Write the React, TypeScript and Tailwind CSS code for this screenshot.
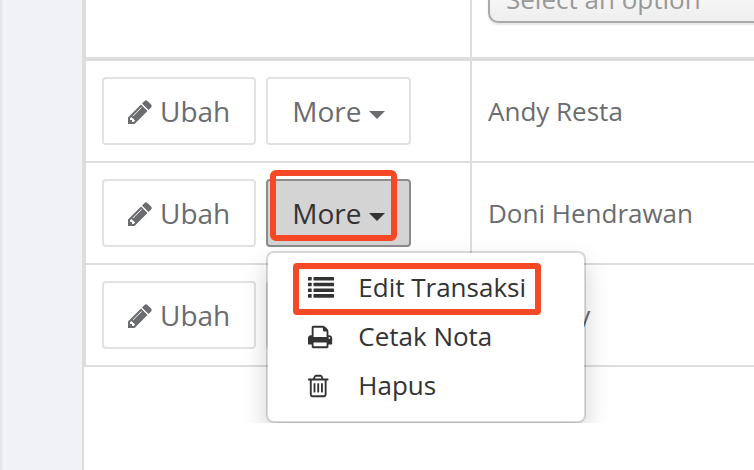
import type { ReactNode } from "react";

interface Order {
  name: string;
  open?: boolean;
}

const orders: Order[] = [
  { name: "Andy Resta" },
  { name: "Doni Hendrawan", open: true },
  { name: "Anthony" },
];

function PencilIcon() {
  return (
    <svg viewBox="128 128 1536 1536" className="mt-0.5 w-6 h-6 fill-current" aria-hidden="true">
      <path d="M491 1536l91-91-235-235-91 91v107h128v128h107zm523-928q0-22-22-22-10 0-17 7l-542 542q-7 7-7 17 0 22 22 22 10 0 17-7l542-542q7-7 7-17zm-54-192l416 416-832 832h-416v-416zm683 96q0 53-37 90l-166 166-416-416 166-165q36-38 90-38 53 0 91 38l235 234q37 39 37 91z" />
    </svg>
  );
}

function ListIcon() {
  return (
    <svg viewBox="0 0 26 26" className="w-[26px] h-[26px] fill-current" aria-hidden="true">
      {[2, 7.7, 13.4, 19.1].map((y) => (
        <g key={y}>
          <rect x="0" y={y} width="3.7" height="3.6" rx="0.5" />
          <rect x="5.5" y={y} width="20.5" height="3.6" rx="0.5" />
        </g>
      ))}
    </svg>
  );
}

function PrintIcon() {
  return (
    <svg viewBox="64 0 1792 1792" className="w-[26px] h-[26px] fill-current" aria-hidden="true">
      <path d="M448 1536h896v-256h-896v256zm0-640h896v-384h-160q-40 0-68-28t-28-68v-160h-640v640zm1152 64q0-26-19-45t-45-19-45 19-19 45 19 45 45 19 45-19 19-45zm128 0v416q0 13-9.5 22.5t-22.5 9.5h-224v160q0 40-28 68t-68 28h-960q-40 0-68-28t-28-68v-160h-224q-13 0-22.5-9.5t-9.5-22.5v-416q0-79 56.5-135.5t135.5-56.5h64v-544q0-40 28-68t68-28h672q40 0 88 20t76 48l152 152q28 28 48 76t20 88v256h64q79 0 135.5 56.5t56.5 135.5z" />
    </svg>
  );
}

function TrashIcon() {
  return (
    <svg viewBox="192 0 1792 1792" className="w-[26px] h-[26px] fill-current" aria-hidden="true">
      <path d="M704 736v576q0 14-9 23t-23 9h-64q-14 0-23-9t-9-23v-576q0-14 9-23t23-9h64q14 0 23 9t9 23zm256 0v576q0 14-9 23t-23 9h-64q-14 0-23-9t-9-23v-576q0-14 9-23t23-9h64q14 0 23 9t9 23zm256 0v576q0 14-9 23t-23 9h-64q-14 0-23-9t-9-23v-576q0-14 9-23t23-9h64q14 0 23 9t9 23zm128 724v-948h-896v948q0 22 7 40.5t14.5 27 10.5 8.5h832q3 0 10.5-8.5t14.5-27 7-40.5zm-672-1076h448l-48-117q-7-9-17-11h-317q-10 2-17 11zm928 32v64q0 14-9 23t-23 9h-96v948q0 83-47 143.5t-113 60.5h-832q-66 0-113-58.5t-47-141.5v-952h-96q-14 0-23-9t-9-23v-64q0-14 9-23t23-9h309l70-167q15-37 54-63t79-26h320q40 0 79 26t54 63l70 167h309q14 0 23 9t9 23z" />
    </svg>
  );
}

function MenuItem({ icon, label, marked }: { icon: ReactNode; label: string; marked?: boolean }) {
  return (
    <li className="relative">
      <a href="#" className="flex h-[49px] items-center gap-6 px-10 text-[26px]">
        {icon}
        {label}
      </a>
      {marked && (
        <span className="pointer-events-none absolute top-0 left-[25px] right-[43px] -bottom-[3px] rounded-sm border-6 border-[#f54825]" />
      )}
    </li>
  );
}

function MoreMenu({ open }: { open?: boolean }) {
  return (
    <div className="relative">
      <button
        type="button"
        aria-expanded={!!open}
        className={
          open
            ? "flex items-center gap-2 rounded-sm border-2 border-[#8c8c8c] bg-[#d4d4d4] px-6 py-3 leading-10 text-[#333]"
            : "flex items-center gap-2 rounded-sm border-2 border-[#e2e2e4] bg-white px-6 py-3 leading-10"
        }
      >
        More
        <span className="mt-2 border-x-8 border-t-8 border-x-transparent border-t-current" />
      </button>
      {open && (
        <>
          {/* Highlight */}
          <span className="pointer-events-none absolute -top-[9px] left-1 h-[71px] w-[127px] rounded-md border-6 border-[#f54825]" />

          {/* Menu */}
          <ul className="absolute left-0 top-[72px] z-10 w-80 rounded-lg border-2 border-black/15 bg-white bg-clip-padding pt-2.5 pb-[11px] text-[#333] shadow-[0_12px_24px_rgba(0,0,0,0.175)]">
            <MenuItem icon={<ListIcon />} label="Edit Transaksi" marked />
            <MenuItem icon={<PrintIcon />} label="Cetak Nota" />
            <MenuItem icon={<TrashIcon />} label="Hapus" />
          </ul>
        </>
      )}
    </div>
  );
}

export default function App() {
  return (
    <div className="flex min-h-screen bg-[#f1f2f7] font-['Open_Sans',sans-serif] text-[#6a6c6f]">
      <aside className="w-[82px] shrink-0 border-l-2 border-[#e4e5e7]" />

      <main className="min-w-0 flex-1 border-l-2 border-[#ddd] bg-white">
        <div className="overflow-hidden pb-14">
          <table className="w-[calc(100%+80px)] table-fixed border-separate border-spacing-0 border-l-2 border-[#ddd] text-left">
            <thead>
              <tr>
                <th className="w-[386px] border-b-4 border-r-2 border-[#ddd]" aria-label="Aksi" />
                <th className="border-b-4 border-[#ddd] px-4 py-0 font-normal">
                  {/* Filter */}
                  <div className="flex h-[57px] items-end pb-[34px]">
                    <select
                      aria-label="Nama"
                      className="h-[52px] w-full shrink-0 appearance-none rounded-[10px] border-2 border-[#aaa] bg-linear-to-b from-white to-[#eee] px-4 pt-1 text-[26px] text-[#999] shadow-[0_2px_2px_rgba(0,0,0,0.1)]"
                    >
                      <option>Select an option</option>
                    </select>
                  </div>
                </th>
              </tr>
            </thead>
            <tbody>
              {orders.map((order) => (
                <tr key={order.name}>
                  <td className="border-b-2 border-r-2 border-[#ddd] p-4">
                    <div className="flex gap-2.5 text-[28px]">
                      <button
                        type="button"
                        className="flex items-center gap-2 rounded-sm border-2 border-[#e2e2e4] bg-white px-6 py-3 leading-10"
                      >
                        <PencilIcon />
                        Ubah
                      </button>
                      <MoreMenu open={order.open} />
                    </div>
                  </td>
                  <td className="border-b-2 border-[#ddd] p-4 text-[26px]">{order.name}</td>
                </tr>
              ))}
            </tbody>
          </table>
        </div>
      </main>
    </div>
  );
}
